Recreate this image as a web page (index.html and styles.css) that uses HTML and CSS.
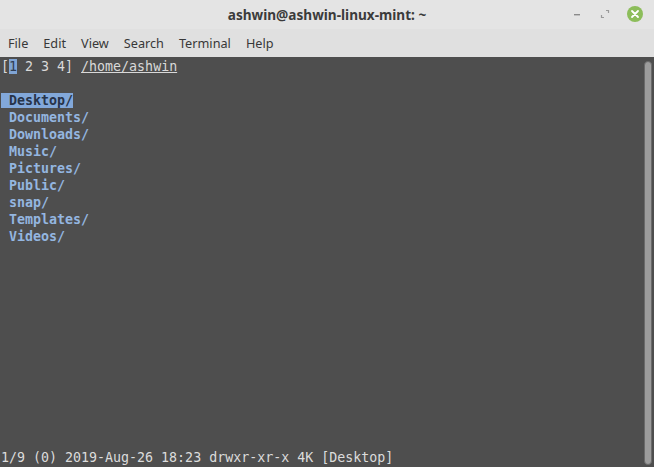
FILE: index.html
```
<!DOCTYPE html>
<html>

<head>
    <meta charset="UTF-8">
    <link rel="stylesheet" href="styles.css">
    <title>ashwin@ashwin-linux-mint: ~</title>
</head>

<body>
    <div class="window">
        <div class="titleBar">
            <div class="title">ashwin@ashwin-linux-mint: ~</div>
            <div class="controls">
                <svg class="ctl" width="14" height="14" viewBox="0 0 14 14">
                    <rect x="4" y="7" width="6" height="1.4" fill="#8a8a8a" />
                </svg>
                <svg class="ctl" width="14" height="14" viewBox="0 0 14 14">
                    <path d="M8 3.5h2.5V6M6 10.5H3.5V8" stroke="#9a9a9a" stroke-width="1.2" fill="none" />
                </svg>
                <svg class="ctl" width="18" height="18" viewBox="0 0 18 18">
                    <circle cx="9" cy="9" r="8" fill="#8cbd5a" />
                    <path d="M6 6l6 6M12 6l-6 6" stroke="#ffffff" stroke-width="1.8" stroke-linecap="round" />
                </svg>
            </div>
        </div>
        <div class="menuBar">
            <span>File</span>
            <span>Edit</span>
            <span>View</span>
            <span>Search</span>
            <span>Terminal</span>
            <span>Help</span>
        </div>
        <div class="terminal">
            <div class="screen">
                <div class="line">[<span class="cursor">1</span> 2 3 4] <span class="path">/home/ashwin</span></div>
                <div class="line"></div>
                <div class="line dir"><span class="sel"> Desktop/</span></div>
                <div class="line dir"> Documents/</div>
                <div class="line dir"> Downloads/</div>
                <div class="line dir"> Music/</div>
                <div class="line dir"> Pictures/</div>
                <div class="line dir"> Public/</div>
                <div class="line dir"> snap/</div>
                <div class="line dir"> Templates/</div>
                <div class="line dir"> Videos/</div>
                <div class="line status">1/9 (0) 2019-Aug-26 18:23 drwxr-xr-x 4K [Desktop]</div>
            </div>
            <div class="scrollbar">
                <div class="thumb"></div>
            </div>
        </div>
    </div>
</body>

</html>
```

FILE: styles.css
```
body {
    margin: 0;
    width: 654px;
    height: 467px;
    overflow: hidden;
}

.window {
    display: flex;
    flex-direction: column;
    height: 100%;
    background: #e3e3e3;
}

.titleBar {
    height: 29px;
    display: flex;
    align-items: center;
    justify-content: center;
    position: relative;
    background: #e4e4e4;
}

.title {
    font-family: "Noto Sans", sans-serif;
    font-weight: 700;
    font-size: 13.6px;
    color: #3b3b3b;
}

.controls {
    position: absolute;
    right: 10px;
    top: 5px;
    display: flex;
    align-items: center;
    gap: 14px;
}

.menuBar {
    height: 28px;
    display: flex;
    align-items: center;
    gap: 15px;
    padding-left: 8px;
    font-family: "Noto Sans", sans-serif;
    font-size: 12.7px;
    color: #383838;
    background: #e0e0e0;
}

.terminal {
    flex: 1;
    display: flex;
    background: #4e4e4e;
}

.screen {
    flex: 1;
    display: flex;
    flex-direction: column;
    padding: 1px 0 1px 1px;
    font-family: "DejaVu Sans Mono", monospace;
    font-size: 13.3px;
    color: #d9d9d9;
}

.line {
    height: 17px;
    line-height: 17px;
    white-space: pre;
}

.cursor {
    background: #7fa4d4;
    color: #2f3d52;
}

.path {
    text-decoration: underline;
}

.dir {
    color: #94b6e0;
    font-weight: 700;
}

.sel {
    background: #82a8da;
    color: #27344a;
}

.status {
    margin-top: auto;
    color: #dcdcdc;
}

.scrollbar {
    width: 12px;
    padding: 4px 0 2px;
    display: flex;
    justify-content: center;
}

.thumb {
    width: 6px;
    background: #9c9c9c;
    border: 1px solid #6a6a6a;
    border-radius: 4px;
}
```
